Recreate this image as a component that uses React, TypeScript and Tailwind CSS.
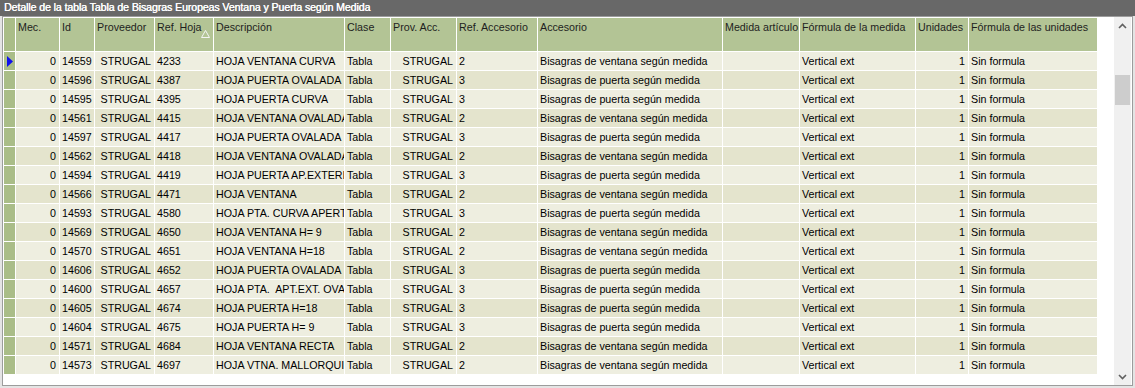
import React from 'react';

type Col = { key: string; title: string; w: string; right?: boolean };

const cols: Col[] = [
    { key: 'mec', title: 'Mec.', w: 'w-[44px]', right: true },
    { key: 'id', title: 'Id', w: 'w-[35px]' },
    { key: 'prov', title: 'Proveedor', w: 'w-[60px]', right: true },
    { key: 'ref', title: 'Ref. Hoja', w: 'w-[59px]' },
    { key: 'desc', title: 'Descripción', w: 'w-[131px]' },
    { key: 'clase', title: 'Clase', w: 'w-[46px]' },
    { key: 'provAcc', title: 'Prov. Acc.', w: 'w-[66px]', right: true },
    { key: 'refAcc', title: 'Ref. Accesorio', w: 'w-[81px]' },
    { key: 'acc', title: 'Accesorio', w: 'w-[185px]' },
    { key: 'medida', title: 'Medida artículo', w: 'w-[77px]' },
    { key: 'formMed', title: 'Fórmula de la medida', w: 'w-[116px]' },
    { key: 'unid', title: 'Unidades', w: 'w-[53px]', right: true },
    { key: 'formUnid', title: 'Fórmula de las unidades', w: 'w-[129px]' },
];

const VENTANA = 'Bisagras de ventana según medida';
const PUERTA = 'Bisagras de puerta según medida';

const raw: [string, string, string, boolean][] = [
    ['14559', '4233', 'HOJA VENTANA CURVA', true],
    ['14596', '4387', 'HOJA PUERTA OVALADA', false],
    ['14595', '4395', 'HOJA PUERTA CURVA', false],
    ['14561', '4415', 'HOJA VENTANA OVALADA', true],
    ['14597', '4417', 'HOJA PUERTA OVALADA', false],
    ['14562', '4418', 'HOJA VENTANA OVALADA', true],
    ['14594', '4419', 'HOJA PUERTA AP.EXTERIOR', false],
    ['14566', '4471', 'HOJA VENTANA', true],
    ['14593', '4580', 'HOJA PTA. CURVA APERTURA', false],
    ['14569', '4650', 'HOJA VENTANA H= 9', true],
    ['14570', '4651', 'HOJA VENTANA H=18', true],
    ['14606', '4652', 'HOJA PUERTA OVALADA', false],
    ['14600', '4657', 'HOJA PTA.  APT.EXT. OVALADA', false],
    ['14605', '4674', 'HOJA PUERTA H=18', false],
    ['14604', '4675', 'HOJA PUERTA H= 9', false],
    ['14571', '4684', 'HOJA VENTANA RECTA', true],
    ['14573', '4697', 'HOJA VTNA. MALLORQUINA', true],
];

const rows: Record<string, string>[] = raw.map(([id, ref, desc, ventana]) => ({
    mec: '0',
    id,
    prov: 'STRUGAL',
    ref,
    desc,
    clase: 'Tabla',
    provAcc: 'STRUGAL',
    refAcc: ventana ? '2' : '3',
    acc: ventana ? VENTANA : PUERTA,
    medida: '',
    formMed: 'Vertical ext',
    unid: '1',
    formUnid: 'Sin formula',
}));

export default function App() {
    return (
        <div className="w-[1135px] h-[388px] bg-[#e4e4e4] flex flex-col text-[10.7px] text-black overflow-hidden" style={{ fontFamily: '"Liberation Sans", Arial, sans-serif' }}>
            <div className="h-[16px] bg-[#686868] text-white text-[10.6px] tracking-[-0.1px] pl-[4px] leading-[15px] shrink-0 [text-shadow:0.3px_0_0_#fff]">
                Detalle de la tabla Tabla de Bisagras Europeas Ventana y Puerta según Medida
            </div>

            <div className="flex-1 mx-[2px] mb-[2px] border border-[#9c9c9c] bg-white flex min-h-0">
                <div className="flex flex-col pt-px">
                    {/* header */}
                    <div className="flex h-[34px] border-l border-white">
                        <div className="w-[12px] bg-[#aabd88] border-r border-b border-white" />
                        {cols.map((c) => (
                            <div key={c.key} className={`${c.w} relative bg-[#b3c495] border-r border-b border-white pl-[2px] pt-[3px] text-[#1e1e1e] whitespace-nowrap overflow-hidden leading-[13px]`}>
                                {c.title}
                                {c.key === 'ref' && (
                                    <svg className="absolute left-[46px] top-[12px]" width="9" height="8" viewBox="0 0 9 8">
                                        <polygon points="4.5,0.5 8.5,7.5 0.5,7.5" fill="none" stroke="#f4f4f4" strokeWidth="1" />
                                    </svg>
                                )}
                            </div>
                        ))}
                    </div>

                    {/* rows */}
                    {rows.map((r, i) => (
                        <div key={i} className={`flex h-[19px] border-l border-white ${i % 2 === 0 ? 'bg-[#eeeee0]' : 'bg-[#e4e4cd]'}`}>
                            <div className="w-[12px] bg-[#aabd88] border-r border-b border-white flex items-center">
                                {i === 0 && (
                                    <svg className="ml-[3px]" width="6" height="11" viewBox="0 0 6 11">
                                        <polygon points="0,0 6,5.5 0,11" fill="#1010ee" />
                                    </svg>
                                )}
                            </div>
                            {cols.map((c) => (
                                <div key={c.key} className={`${c.w} border-r border-b border-white overflow-hidden whitespace-pre leading-[18px] ${c.right ? 'text-right pr-[3px]' : 'pl-[2px]'}`}>
                                    {r[c.key]}
                                </div>
                            ))}
                        </div>
                    ))}
                </div>

                <div className="flex-1" />

                {/* scrollbar */}
                <div className="w-[17px] bg-[#f0f0f0] flex flex-col items-center mr-px">
                    <div className="h-[17px] flex items-center justify-center">
                        <svg width="9" height="6" viewBox="0 0 9 6">
                            <polyline points="1,5 4.5,1.5 8,5" fill="none" stroke="#606060" strokeWidth="1.6" />
                        </svg>
                    </div>
                    <div className="mt-[41px] h-[30px] w-[15px] bg-[#cdcdcd]" />
                    <div className="flex-1" />
                    <div className="h-[17px] flex items-center justify-center">
                        <svg width="9" height="6" viewBox="0 0 9 6">
                            <polyline points="1,1 4.5,4.5 8,1" fill="none" stroke="#606060" strokeWidth="1.6" />
                        </svg>
                    </div>
                </div>
            </div>
        </div>
    );
}
